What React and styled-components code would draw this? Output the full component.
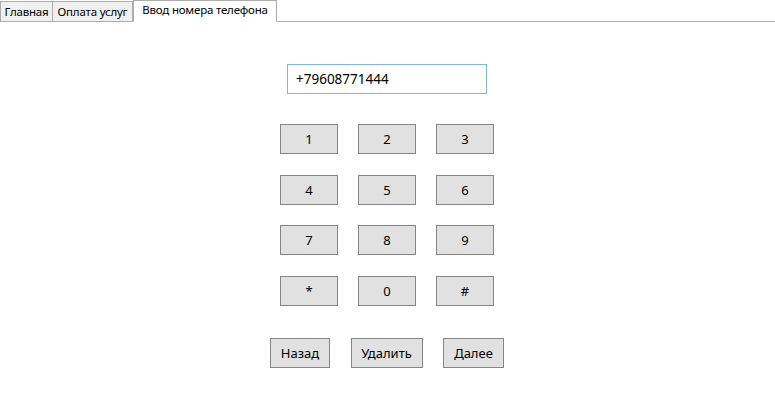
import React from "react";
import styled, { createGlobalStyle } from "styled-components";

const Global = createGlobalStyle`
  html, body { margin: 0; padding: 0; background: #ffffff; }
  body { font-family: "Noto Sans", "Open Sans", sans-serif; color: #000; }
`;

const Page = styled.div`
  width: 775px;
  height: 405px;
  display: flex;
  flex-direction: column;
  background: #fff;
`;

const TabStrip = styled.div`
  display: flex;
  align-items: flex-end;
  height: 22px;
  box-sizing: border-box;
  border-bottom: 1px solid #acacac;
`;

const Tab = styled.div`
  box-sizing: border-box;
  width: ${(p) => p.$w}px;
  height: ${(p) => (p.$active ? 22 : 20)}px;
  margin-bottom: ${(p) => (p.$active ? -1 : 0)}px;
  align-self: ${(p) => (p.$active ? "flex-start" : "auto")};
  display: flex;
  align-items: center;
  justify-content: center;
  font-size: 11.5px;
  letter-spacing: -0.2px;
  background: ${(p) => (p.$active ? "#ffffff" : "#f0f0f0")};
  border: 1px solid #acacac;
  border-bottom: ${(p) => (p.$active ? "1px solid #ffffff" : "none")};
  border-left: ${(p) => (p.$first || p.$active ? "1px solid #acacac" : "none")};
  padding-bottom: ${(p) => (p.$active ? 3 : 1)}px;
  white-space: nowrap;
`;

const Content = styled.div`
  flex: 1;
  display: flex;
  flex-direction: column;
  align-items: center;
  padding-top: 42px;
  padding-right: 1px;
`;

const PhoneInput = styled.input`
  box-sizing: border-box;
  width: 200px;
  height: 30px;
  border: 1px solid #7eb4ea;
  outline: none;
  padding: 0 8px;
  font-family: "Noto Sans", "Open Sans", sans-serif;
  font-size: 13.5px;
  color: #000;
  background: #fff;
`;

const Keypad = styled.div`
  margin-top: 30px;
  display: grid;
  grid-template-columns: repeat(3, 58px);
  grid-auto-rows: 30px;
  column-gap: 20px;
  row-gap: 20.67px;
`;

const Button = styled.button`
  box-sizing: border-box;
  width: ${(p) => (p.$w ? `${p.$w}px` : "100%")};
  height: 30px;
  margin: 0;
  padding: 0;
  background: #e1e1e1;
  border: 1px solid #858585;
  border-radius: 0;
  font-family: "Noto Sans", "Open Sans", sans-serif;
  font-size: 13px;
  color: #000;
  display: flex;
  align-items: center;
  justify-content: center;
`;

const ActionRow = styled.div`
  margin-top: 32px;
  display: flex;
  gap: 20.5px;
`;

const keys = ["1", "2", "3", "4", "5", "6", "7", "8", "9", "*", "0", "#"];

export default function App() {
  return (
    <Page>
      <Global />
      <TabStrip>
        <Tab $w={53} $first>Главная</Tab>
        <Tab $w={80}>Оплата услуг</Tab>
        <Tab $w={144} $active>Ввод номера телефона</Tab>
      </TabStrip>
      <Content>
        <PhoneInput defaultValue="+79608771444" readOnly />
        <Keypad>
          {keys.map((k) => (
            <Button key={k}>{k}</Button>
          ))}
        </Keypad>
        <ActionRow>
          <Button $w={60}>Назад</Button>
          <Button $w={72}>Удалить</Button>
          <Button $w={61}>Далее</Button>
        </ActionRow>
      </Content>
    </Page>
  );
}
